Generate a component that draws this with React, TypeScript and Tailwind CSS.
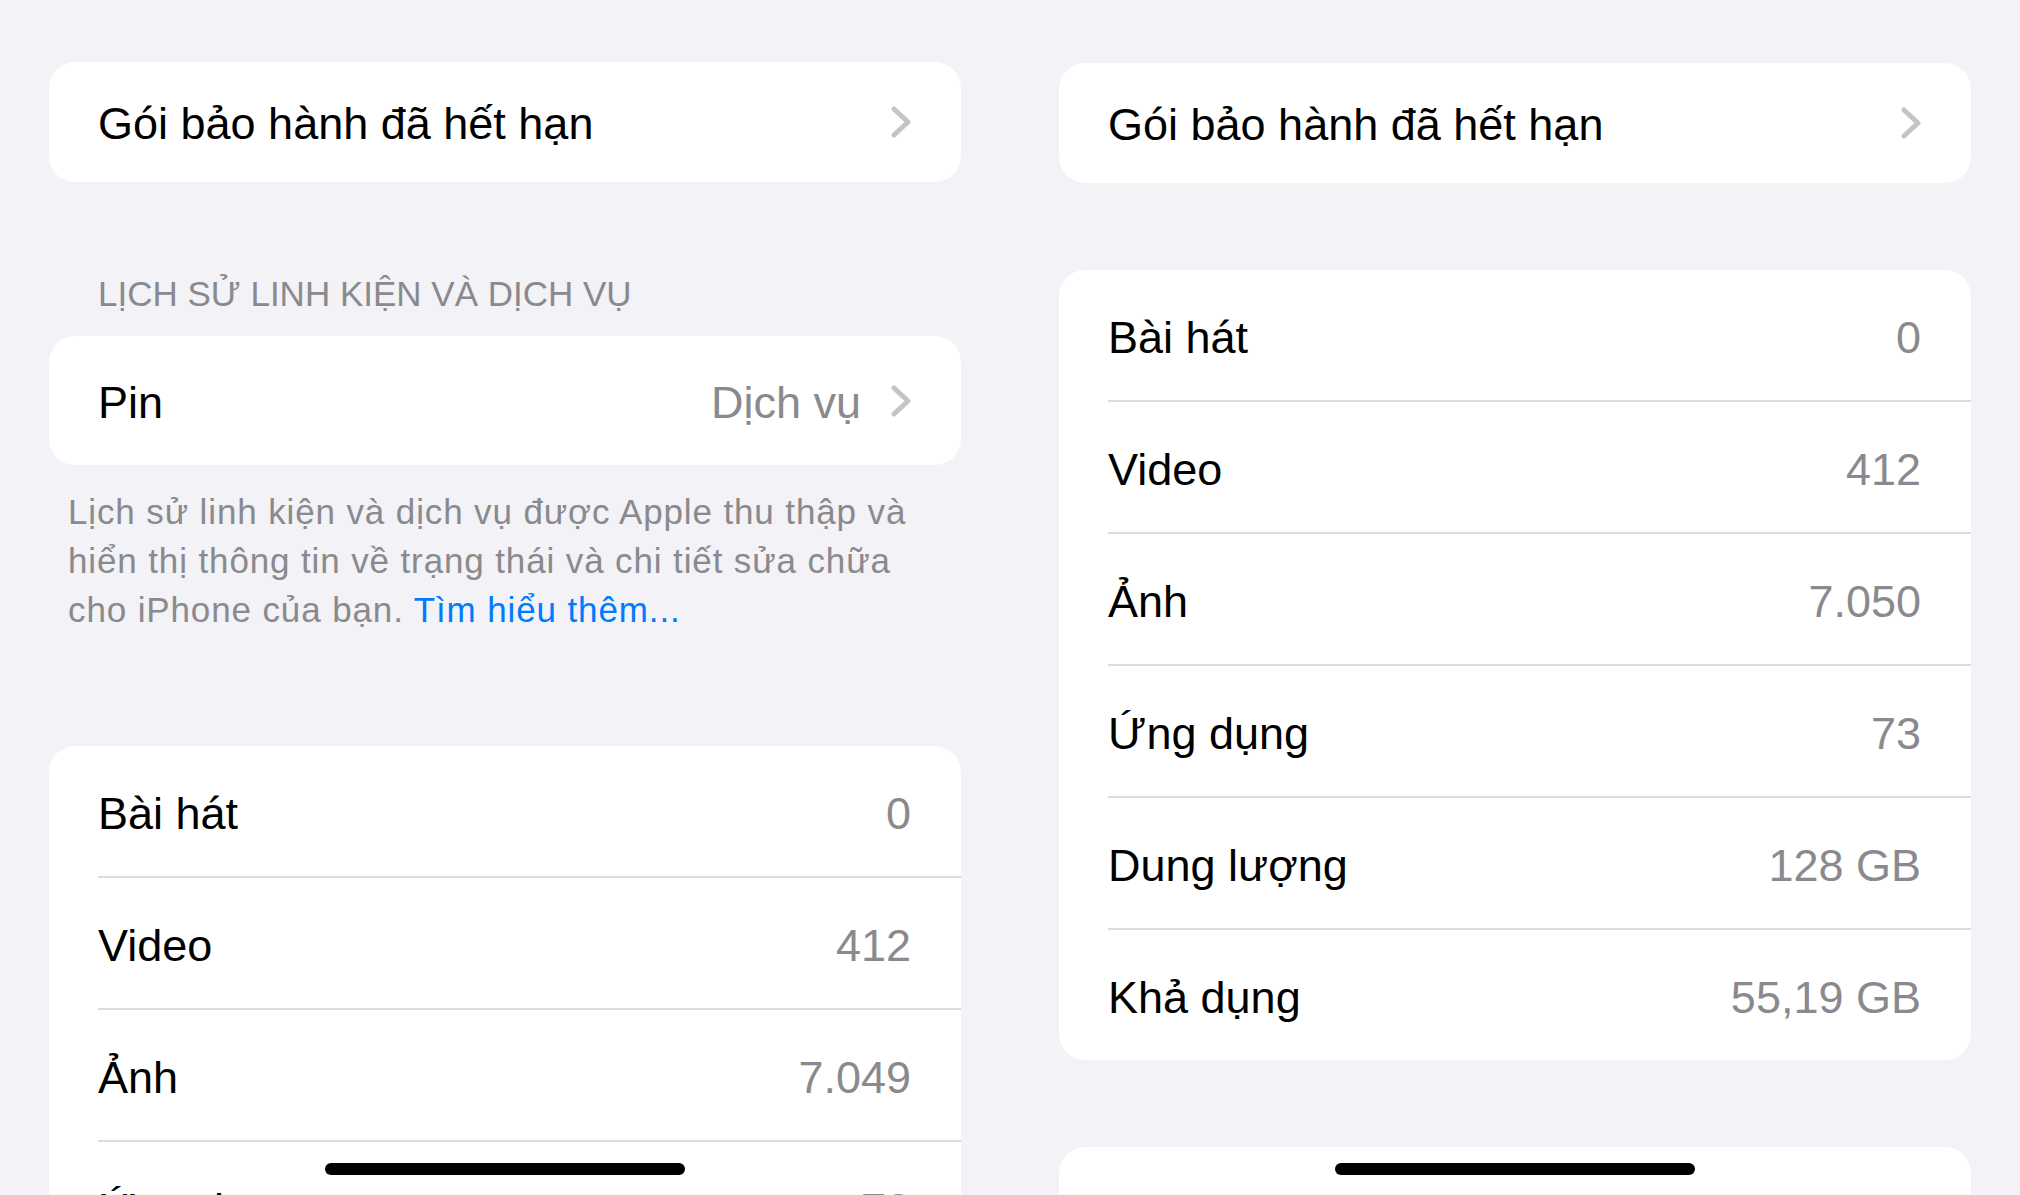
import React from "react";

const Chevron = () => (
  <svg width="20" height="32" viewBox="0 0 20 32" fill="none" className="shrink-0">
    <path d="M3 3 L17 16 L3 29" stroke="#c4c4c7" strokeWidth="5" strokeLinecap="round" strokeLinejoin="round" />
  </svg>
);

const Sep = () => <div className="ml-[49px] h-[2px] bg-[#dcdcdf]" />;

const DataRow = ({ label, value }: { label: string; value: string }) => (
  <div className="flex h-[130px] items-center justify-between pl-[49px] pr-[50px] pt-[5px]">
    <span className="text-[45px] leading-none text-black">{label}</span>
    <span className="text-[45px] leading-none text-[#8a8a8e]">{value}</span>
  </div>
);

const DataCard = ({ rows, className }: { rows: [string, string][]; className?: string }) => (
  <div className={"overflow-hidden rounded-[26px] bg-white " + (className ?? "")}>
    {rows.map(([l, v], i) => (
      <React.Fragment key={l}>
        {i > 0 && <Sep />}
        <DataRow label={l} value={v} />
      </React.Fragment>
    ))}
  </div>
);

const WarrantyCard = () => (
  <div className="flex h-[120px] items-center justify-between rounded-[26px] bg-white pl-[49px] pr-[50px]">
    <span className="pt-[3px] text-[45px] leading-none text-black">Gói bảo hành đã hết hạn</span>
    <Chevron />
  </div>
);

const HomeIndicator = () => (
  <div className="absolute bottom-[20px] left-1/2 h-[12px] w-[360px] -translate-x-1/2 rounded-full bg-black" />
);

export default function App() {
  return (
    <div
      className="flex h-[1195px] w-[2020px] overflow-hidden bg-[#f2f2f7]"
      style={{ fontFamily: '"Liberation Sans", Arial, sans-serif' }}
    >
      {/* Left screen */}
      <div className="relative w-[1010px] shrink-0 px-[49px] pt-[62px]">
        <WarrantyCard />
        <div className="mt-[91px] pl-[49px] text-[35px] leading-[42px] text-[#8a8a8e]">
          LỊCH SỬ LINH KIỆN VÀ DỊCH VỤ
        </div>
        <div className="mt-[21px] flex h-[129px] items-center justify-between rounded-[26px] bg-white pl-[49px] pr-[50px]">
          <span className="pt-[4px] text-[45px] leading-none text-black">Pin</span>
          <div className="flex items-center gap-[30px]">
            <span className="pt-[4px] text-[45px] leading-none text-[#8a8a8e]">Dịch vụ</span>
            <Chevron />
          </div>
        </div>
        <p className="mt-[22px] whitespace-nowrap pl-[19px] text-[35px] leading-[49px] tracking-[0.025em] text-[#8a8a8e]">
          Lịch sử linh kiện và dịch vụ được Apple thu thập và
          <br />
          hiển thị thông tin về trạng thái và chi tiết sửa chữa
          <br />
          cho iPhone của bạn. <span className="text-[#007aff]">Tìm hiểu thêm...</span>
        </p>
        <DataCard
          className="mt-[112px]"
          rows={[
            ["Bài hát", "0"],
            ["Video", "412"],
            ["Ảnh", "7.049"],
            ["Ứng dụng", "73"],
          ]}
        />
        <HomeIndicator />
      </div>

      {/* Right screen */}
      <div className="relative w-[1010px] shrink-0 px-[49px] pt-[63px]">
        <WarrantyCard />
        <DataCard
          className="mt-[87px]"
          rows={[
            ["Bài hát", "0"],
            ["Video", "412"],
            ["Ảnh", "7.050"],
            ["Ứng dụng", "73"],
            ["Dung lượng", "128 GB"],
            ["Khả dụng", "55,19 GB"],
          ]}
        />
        <div className="mt-[87px] h-[200px] rounded-[26px] bg-white" />
        <HomeIndicator />
      </div>
    </div>
  );
}
